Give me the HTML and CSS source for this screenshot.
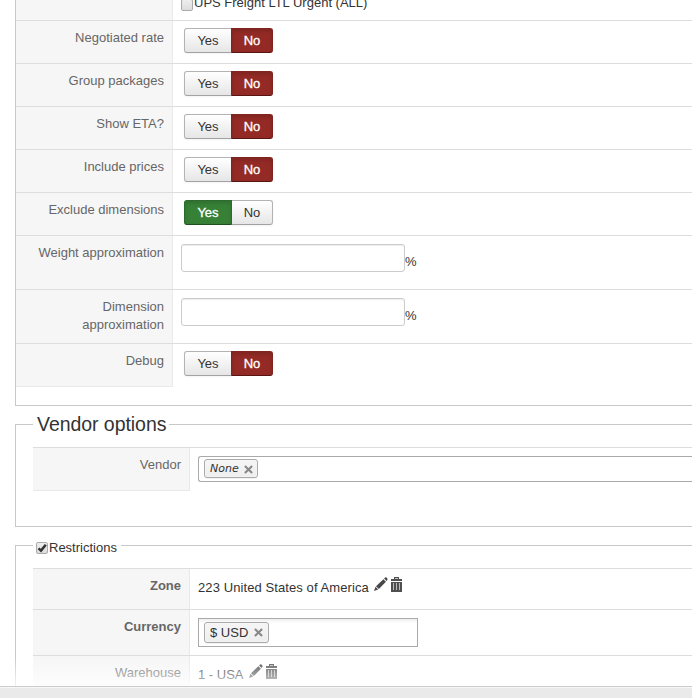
FILE: index.html
```html
<!DOCTYPE html>
<html lang="en">
<head>
<meta charset="utf-8">
<title>Shipping method options</title>
<link rel="stylesheet" href="styles.css">
</head>
<body>
<svg class="symbols" aria-hidden="true">
  <symbol id="pencil" viewBox="0 0 14 14"><path d="M0 14 1.500 9.800l2.700 2.700zM2 9.200 9.400 2.200l2.500 2.500L4.900 12zM10.100 1.600 11.100.6q.7-.6 1.400 0l.8.8q.6.8 0 1.500l-.9 1.100z"/></symbol>
  <symbol id="trash" viewBox="0 0 11 15"><path d="M3 0h5v2h3v2H0V2h3zM0 5h11v10H0z"/><path d="M4 1h3v1H4zM2 6h1v7H2zM5 6h1v7H5zM8 6h1v7H8z" fill="#bbb"/></symbol>
  <symbol id="close" viewBox="0 0 10 10"><path d="M1 1 9 9M9 1 1 9" fill="none" stroke="#888" stroke-width="2.300"/></symbol>
</svg>
<main class="page">
  <section class="group group-first">
    <div class="row row-service"><div class="key"></div><div class="value"><span class="check"></span><span class="service">UPS Freight LTL Urgent (ALL)</span></div></div>
    <div class="row"><div class="key">Negotiated rate</div><div class="value"><div class="toggle"><span class="btn">Yes</span><span class="btn no">No</span></div></div></div>
    <div class="row"><div class="key">Group packages</div><div class="value"><div class="toggle"><span class="btn">Yes</span><span class="btn no">No</span></div></div></div>
    <div class="row"><div class="key">Show ETA?</div><div class="value"><div class="toggle"><span class="btn">Yes</span><span class="btn no">No</span></div></div></div>
    <div class="row"><div class="key">Include prices</div><div class="value"><div class="toggle"><span class="btn">Yes</span><span class="btn no">No</span></div></div></div>
    <div class="row"><div class="key">Exclude dimensions</div><div class="value"><div class="toggle"><span class="btn yes">Yes</span><span class="btn">No</span></div></div></div>
    <div class="row row-input"><div class="key">Weight approximation</div><div class="value"><span class="input"></span><span class="unit">%</span></div></div>
    <div class="row row-input"><div class="key">Dimension<br>approximation</div><div class="value"><span class="input"></span><span class="unit">%</span></div></div>
    <div class="row row-last"><div class="key">Debug</div><div class="value"><div class="toggle"><span class="btn">Yes</span><span class="btn no">No</span></div></div></div>
  </section>
  <section class="group group-vendor">
    <h2 class="heading"><span class="title">Vendor options</span></h2>
    <div class="row row-last"><div class="key">Vendor</div><div class="value"><div class="chosen"><span class="tag tag-none"><em>None</em><svg class="close"><use href="#close"/></svg></span></div></div></div>
  </section>
  <section class="group group-restrict">
    <h2 class="heading"><span class="check checked"><svg viewBox="0 0 10 10"><path d="M1.500 5.400 4 7.600 8.800 1.800" fill="none" stroke="#333" stroke-width="2.500"/></svg></span><span class="title">Restrictions</span></h2>
    <div class="row row-zone"><div class="key strong">Zone</div><div class="value"><span class="place zone">223 United States of America</span><svg class="pencil"><use href="#pencil"/></svg><svg class="trash"><use href="#trash"/></svg></div></div>
    <div class="row row-currency"><div class="key strong">Currency</div><div class="value"><div class="chosen small"><span class="tag tag-usd"><span>$ USD</span><svg class="close"><use href="#close"/></svg></span></div></div></div>
    <div class="row row-warehouse"><div class="key">Warehouse</div><div class="value"><span class="place">1 - USA</span><svg class="pencil"><use href="#pencil"/></svg><svg class="trash"><use href="#trash"/></svg></div></div>
  </section>
  <div class="fade"></div>
  <footer class="footer"></footer>
</main>
</body>
</html>
```
FILE: styles.css
```css
* { box-sizing: border-box; }
body {
  margin: 0;
  background: #fff;
  color: #333;
  font: 13px/18px "Liberation Sans", Arial, sans-serif;
  overflow: hidden;
}
.symbols { display: none; }
.page {
  position: relative;
  height: 698px;
  overflow: hidden;
}
.group {
  margin-left: 15px;
  border: 1px solid #c8c8c8;
  border-right: 0;
}
.group-first { height: 406px; border-top: 0; }
.row {
  display: flex;
  height: 43px;
  border-top: 1px solid #ddd;
}
.row-service { height: 20px; border-top: 0; }
.row-input { height: 54px; }
.row-last { height: 44px; }
.key {
  flex: none;
  width: 157px;
  padding: 8px 8px 0 0;
  background: #f6f6f6;
  border-right: 1px solid #e9e9e9;
  color: #666;
  text-align: right;
}
.row-last .key { border-bottom: 1px solid #e9e9e9; }
.strong { font-weight: bold; }
.value {
  flex: 1;
  display: flex;
  align-items: flex-start;
  padding: 7px 0 0 11px;
}
.row-service .value { padding: 0 0 0 8px; }
.check {
  width: 12px;
  height: 12px;
  border: 1px solid #aaa;
  border-radius: 2px;
  background: linear-gradient(#eee, #dcdcdc);
}
.row-service .check { margin-top: -1px; }
.service { margin: -6px 0 0 1px; }
.check svg { display: block; width: 10px; height: 10px; }
.toggle { display: flex; height: 25px; }
.btn {
  width: 48px;
  border: 1px solid #b3b3b3;
  border-bottom-color: #a2a2a2;
  border-radius: 3px 0 0 3px;
  background: linear-gradient(#fff, #e6e6e6);
  box-shadow: 0 1px 2px rgba(0, 0, 0, .05);
  line-height: 24px;
  text-align: center;
}
.btn + .btn { width: 42px; margin-left: -1px; border-radius: 0 3px 3px 0; }
.btn.no, .btn.yes {
  color: #fff;
  -webkit-text-stroke: .3px #fff;
  box-shadow: inset 0 2px 4px rgba(0, 0, 0, .15);
}
.btn.no { background: #942a25; border-color: #802420 #802420 #5a1512; }
.btn.yes { position: relative; background: #378137; border-color: #2d6a2d #2d6a2d #1f4f1f; }
.row-input .value { padding: 8px 0 0 8px; }
.input {
  width: 224px;
  height: 28px;
  border: 1px solid #ccc;
  border-radius: 3px;
  box-shadow: inset 0 1px 1px rgba(0, 0, 0, .075);
}
.unit { margin-top: 9px; }
.group-vendor, .group-restrict { padding-left: 17px; }
.group-vendor { height: 103px; margin-top: 18px; }
.group-restrict { height: 180px; margin-top: 18px; border-bottom: 0; }
.heading {
  display: flex;
  width: max-content;
  margin: 0;
  background: #fff;
  color: #333;
  font-weight: normal;
}
.group-vendor .heading {
  height: 28px;
  margin: -15px 0 9px;
  padding: 0 3px 0 4px;
  font-size: 19.5px;
  line-height: 28px;
  letter-spacing: -.05px;
}
.group-restrict .heading {
  height: 20px;
  margin: -8px 0 10px;
  padding: 0 4px 0 3px;
  font-size: 13px;
  line-height: 20px;
}
.group-restrict .check { margin: 4px 1px 0 0; }
.group-vendor .value, .group-restrict .value { padding: 8px 0 0 8px; }
.chosen {
  flex: 1;
  height: 26px;
  padding: 2px 5px;
  border: 1px solid #aaa;
  border-right: 0;
  border-radius: 3px 0 0 3px;
  display: flex;
}
.chosen.small {
  flex: none;
  width: 220px;
  height: 29px;
  padding: 3px 5px;
  border-right: 1px solid #aaa;
  border-radius: 0;
  background: linear-gradient(#eee, #fff 15%);
}
.tag {
  display: flex;
  justify-content: space-between;
  border: 1px solid #aaa;
  border-radius: 3px;
  background: linear-gradient(#f4f4f4 20%, #eee);
  box-shadow: 0 0 2px #fff inset, 0 1px 0 rgba(0, 0, 0, .05);
}
.tag-none {
  width: 54px;
  height: 19px;
  padding: 0 4px 0 5px;
  font: 11px/17px "DejaVu Sans", Verdana, sans-serif;
}
.tag-usd { width: 65px; height: 21px; padding: 0 5px; line-height: 20px; }
.close { width: 9px; height: 9px; margin-top: 5px; }
.row-zone { height: 41px; }
.row-currency { height: 46px; }
.row-warehouse { height: 43px; }
.place { margin-top: 2px; }
.zone { letter-spacing: .09px; }
.pencil { width: 14px; height: 14px; margin: 0 3px 0 5px; fill: #484848; }
.trash { width: 11px; height: 15px; fill: #505050; }
.fade {
  position: absolute;
  left: 0;
  right: 0;
  top: 656px;
  height: 30px;
  background: linear-gradient(rgba(255, 255, 255, 0), rgba(255, 255, 255, .75));
}
.footer {
  position: absolute;
  left: 0;
  right: 0;
  bottom: 0;
  height: 12px;
  border-top: 1px solid #ccc;
  background: #eaeaea;
  box-shadow: inset 0 1px 0 #f7f7f7;
}
```
